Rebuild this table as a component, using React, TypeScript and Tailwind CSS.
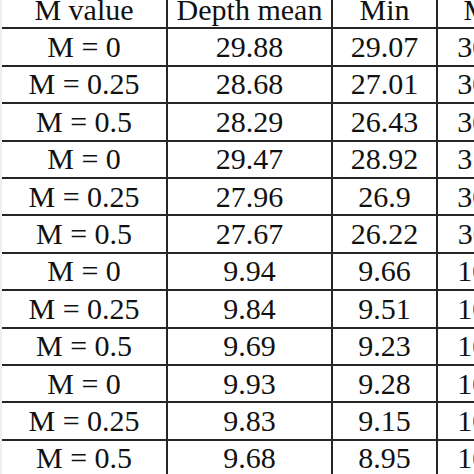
import React from "react";

const rows = [
  ["M = 0", "29.88", "29.07", "30.69"],
  ["M = 0.25", "28.68", "27.01", "30.35"],
  ["M = 0.5", "28.29", "26.43", "30.12"],
  ["M = 0", "29.47", "28.92", "31.02"],
  ["M = 0.25", "27.96", "26.9", "30.05"],
  ["M = 0.5", "27.67", "26.22", "30.11"],
  ["M = 0", "9.94", "9.66", "10.21"],
  ["M = 0.25", "9.84", "9.51", "10.17"],
  ["M = 0.5", "9.69", "9.23", "10.14"],
  ["M = 0", "9.93", "9.28", "10.58"],
  ["M = 0.25", "9.83", "9.15", "10.49"],
  ["M = 0.5", "9.68", "8.95", "10.37"],
];

const widths = ["w-[166px]", "w-[165px]", "w-[105px]", "w-[106px]"];

function Row({ cells }: { cells: string[] }) {
  return (
    <div className="flex h-[37.4px] border-b-2 border-[#262626]">
      {cells.map((c, i) => (
        <div
          key={i}
          className={`${widths[i]} shrink-0 flex items-center justify-center text-[30px] leading-none ${i < 3 ? "border-r-2 border-[#262626]" : ""}`}
        >
          {c}
        </div>
      ))}
    </div>
  );
}

export default function App() {
  return (
    <div className="w-[474px] h-[474px] overflow-hidden bg-white text-[#111] font-['Liberation_Serif',serif]">
      <div className="mt-[-8px] w-[544px] border-l-2 border-[#eeeeee]">
        <Row cells={["M value", "Depth mean", "Min", "Max"]} />
        {rows.map((r, ri) => (
          <Row key={ri} cells={r} />
        ))}
      </div>
    </div>
  );
}
